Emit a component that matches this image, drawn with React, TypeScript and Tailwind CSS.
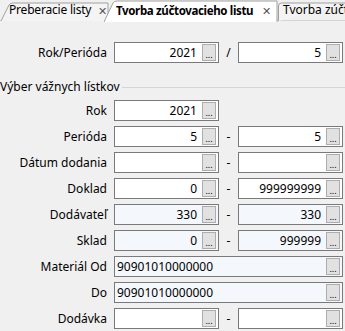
import React from "react";

const font = { fontFamily: '"Noto Sans", "Liberation Sans", sans-serif' };

const Dots = () => (
  <div className="flex h-[17px] w-[14px] shrink-0 items-end justify-center border border-[#adadad] bg-[#e1e1e1] pb-[1px] text-[9px] leading-[9px] text-black">
    ...
  </div>
);

const Field = ({ value = "", blue = false, left = false, wide = false }: { value?: string; blue?: boolean; left?: boolean; wide?: boolean }) => (
  <div
    className={
      "flex h-[21px] items-center border border-[#7a7a7a] pr-[2px] " +
      (wide ? "w-[229px] " : "w-[105px] ") +
      (blue ? "bg-[#f4f8fc]" : "bg-white")
    }
  >
    <div className={"flex-1 truncate text-[12px] leading-[19px] " + (left ? "pl-[2px] text-left" : "pr-[5px] text-right")}>{value}</div>
    <Dots />
  </div>
);

const Row = ({ label, a, b, sep = "-", blue = false }: { label: string; a?: string; b?: string; sep?: string; blue?: boolean }) => (
  <div className="flex h-[21px] items-center">
    <div className="w-[107px] text-right text-[12px] leading-[21px]">{label}</div>
    <div className="ml-[7px]">
      <Field value={a} blue={blue} />
    </div>
    {b !== undefined && (
      <>
        <div className="w-[19px] text-center text-[12px]">{sep}</div>
        <Field value={b} blue={blue} />
      </>
    )}
  </div>
);

const WideRow = ({ label, value }: { label: string; value: string }) => (
  <div className="flex h-[21px] items-center">
    <div className="w-[107px] text-right text-[12px] leading-[21px]">{label}</div>
    <div className="ml-[7px]">
      <Field value={value} blue left wide />
    </div>
  </div>
);

const Tabs = () => (
  <div className="relative flex h-[21px] border-b border-[#d4d4d4] bg-[#f0f0f0] text-[12px]">
    <div className="relative h-[21px] w-[110px] shrink-0">
      <svg className="absolute inset-0" width="110" height="21">
        <path d="M1 21 L9 5 Q10 3 13 3 L108 3 L108 21" fill="#f4f4f4" stroke="#a0a0a0" />
      </svg>
      <div className="relative flex h-full items-end whitespace-nowrap pb-[2px] pl-[9px]">
        <span className="tracking-[-0.2px]">Preberacie listy</span>
        <span className="ml-[7px] text-[11px] text-[#555]">✕</span>
      </div>
    </div>
    <div className="relative -ml-[6px] h-[21px] w-[174px] shrink-0">
      <svg className="absolute inset-0" width="174" height="22">
        <path d="M0 22 L9 3 Q10 1 13 1 L173 1 L173 22" fill="#ffffff" stroke="#a0a0a0" />
      </svg>
      <div className="relative flex h-full items-end whitespace-nowrap pb-[2px] pl-[12px]">
        <span className="text-[11.5px] font-bold tracking-[-0.35px]">Tvorba zúčtovacieho listu</span>
        <span className="ml-[9px] text-[11px] text-[#555]">✕</span>
      </div>
    </div>
    <div className="relative h-[21px] min-w-0 flex-1 overflow-hidden">
      <svg className="absolute inset-0" width="70" height="21">
        <path d="M0.5 21 L0.5 6 Q0.5 3 3.5 3 L70 3" fill="#f4f4f4" stroke="#a0a0a0" />
      </svg>
      <div className="relative flex h-full items-end pb-[2px] pl-[5px]">
        <span className="whitespace-nowrap">Tvorba zúčtovacieho listu</span>
      </div>
    </div>
  </div>
);

export default function App() {
  return (
    <div className="h-[331px] w-[345px] overflow-hidden bg-[#f0f0f0] text-black" style={font}>
      <Tabs />
      <div className="pt-[21px]">
        <Row label="Rok/Perióda" a="2021" b="5" sep="/" />
      </div>
      <div className="mt-[16px] flex items-center">
        <span className="text-[12px] leading-[16px]">Výber vážnych lístkov</span>
        <div className="ml-[2px] h-px flex-1 bg-[#d5d5d5]" />
      </div>
      <div className="mt-[5px] flex flex-col gap-[5px]">
        <Row label="Rok" a="2021" />
        <Row label="Perióda" a="5" b="5" />
        <Row label="Dátum dodania" a="" b="" />
        <Row label="Doklad" a="0" b="999999999" />
        <Row label="Dodávateľ" a="330" b="330" blue />
        <Row label="Sklad" a="0" b="999999" blue />
        <WideRow label="Materiál Od" value="90901010000000" />
        <WideRow label="Do" value="90901010000000" />
        <Row label="Dodávka" a="" b="" />
      </div>
    </div>
  );
}
